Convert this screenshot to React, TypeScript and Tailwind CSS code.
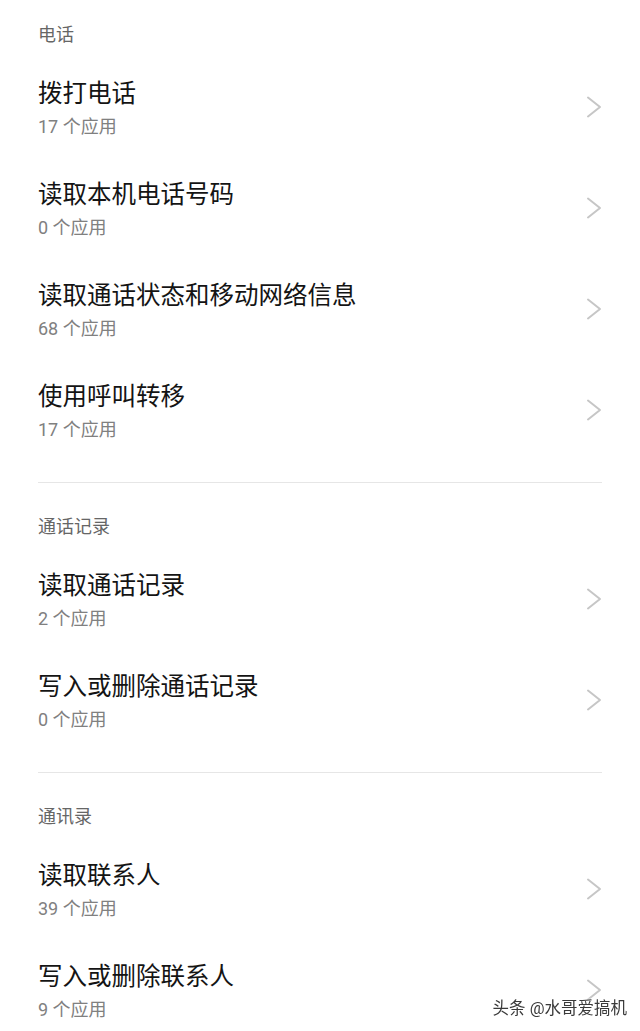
import React from "react";

interface PermissionRow {
  title: string;
  count: number;
}

interface Section {
  name: string;
  rows: PermissionRow[];
}

const sections: Section[] = [
  {
    name: "电话",
    rows: [
      { title: "拨打电话", count: 17 },
      { title: "读取本机电话号码", count: 0 },
      { title: "读取通话状态和移动网络信息", count: 68 },
      { title: "使用呼叫转移", count: 17 },
    ],
  },
  {
    name: "通话记录",
    rows: [
      { title: "读取通话记录", count: 2 },
      { title: "写入或删除通话记录", count: 0 },
    ],
  },
  {
    name: "通讯录",
    rows: [
      { title: "读取联系人", count: 39 },
      { title: "写入或删除联系人", count: 9 },
    ],
  },
];

function Chevron() {
  return (
    <svg width="16" height="22" viewBox="0 0 16 22" fill="none" className="mb-[7px] shrink-0">
      <polyline
        points="2,1.5 14,11 2,20.5"
        stroke="#c6c6c6"
        strokeWidth="2"
        strokeLinecap="round"
        strokeLinejoin="round"
      />
    </svg>
  );
}

export default function App() {
  return (
    <div className="min-h-screen bg-white font-['Roboto','Noto_Sans_CJK_SC',sans-serif]">
      <div className="px-[38px]">
        {sections.map((s, i) => (
          <div key={s.name}>
            {i > 0 && <div className="mt-[19px] h-px bg-[#e6e6e6]" />}
            <h2
              className={`${i === 0 ? "pt-[23px]" : "pt-[32px]"} pb-[12px] text-[18px] leading-[24px] text-[#666666]`}
            >
              {s.name}
            </h2>
            {s.rows.map((r) => (
              <div key={r.title} className="flex items-center justify-between pt-[18px] pb-[17px]">
                <div>
                  <p className="text-[24.5px] leading-[34px] text-[#141414]">{r.title}</p>
                  <p className="text-[18px] leading-[32px] text-[#808080]">{r.count} 个应用</p>
                </div>
                <Chevron />
              </div>
            ))}
          </div>
        ))}
      </div>

      {/* watermark */}
      <div className="fixed right-[13px] bottom-[12px] text-[16.5px] leading-[20px] text-[#3a3a3a] [text-shadow:0_0_2px_#fff,0_0_2px_#fff]">
        头条 @水哥爱搞机
      </div>
    </div>
  );
}
